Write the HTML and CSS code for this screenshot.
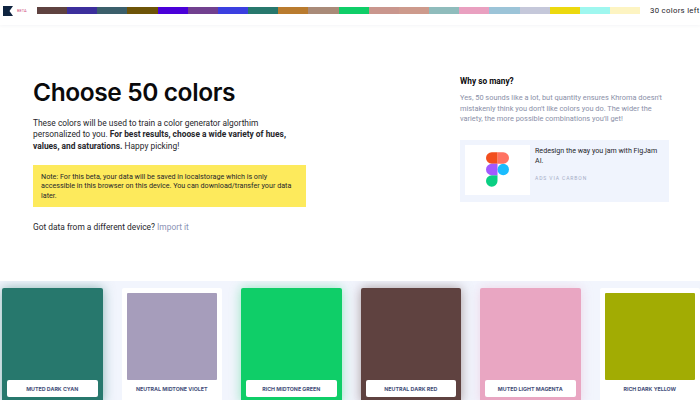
FILE: index.html
```html
<!DOCTYPE html>
<html lang="en">
<head>
  <meta charset="UTF-8">
  <meta name="viewport" content="width=device-width, initial-scale=1.0">
  <title>Choose 50 colors</title>
  <link rel="stylesheet" href="styles.css">
</head>
<body>
  <!-- Top bar with picked colors -->
  <header class="topbar">
    <div class="brand">
      <svg class="logo" viewBox="0 0 10 10" width="10" height="10"><path d="M0 0H10L6.5 5L10 10H0z" fill="#0f2440"/></svg>
      <span class="beta">BETA</span>
    </div>
    <div class="strip">
      <span class="chip c1"></span><span class="chip c2"></span><span class="chip c3"></span><span class="chip c4"></span>
      <span class="chip c5"></span><span class="chip c6"></span><span class="chip c7"></span><span class="chip c8"></span>
      <span class="chip c9"></span><span class="chip c10"></span><span class="chip c11"></span><span class="chip c12"></span>
      <span class="chip c13"></span><span class="chip c14"></span><span class="chip c15"></span><span class="chip c16"></span>
      <span class="chip c17"></span><span class="chip c18"></span><span class="chip c19"></span><span class="chip c20"></span>
    </div>
    <div class="left-count">30 colors left</div>
  </header>

  <main class="intro">
    <section class="intro-main">
      <h1>Choose 50 colors</h1>
      <p class="lead">These colors will be used to train a color generator algorthim personalized to you. <b>For best results, choose a wide variety of hues, values, and saturations.</b> Happy picking!</p>
      <div class="note">Note: For this beta, your data will be saved in localstorage which is only accessible in this browser on this device. You can download/transfer your data later.</div>
      <p class="import">Got data from a different device? <a href="#">Import it</a></p>
    </section>

    <aside class="intro-side">
      <h2>Why so many?</h2>
      <p class="why">Yes, 50 sounds like a lot, but quantity ensures Khroma doesn't mistakenly think you don't like colors you do. The wider the variety, the more possible combinations you'll get!</p>
      <div class="ad">
        <div class="ad-image">
          <svg viewBox="0 0 38 57" width="23" height="35">
            <path d="M19 28.5a9.5 9.5 0 1 1 19 0 9.5 9.5 0 0 1-19 0z" fill="#1abcfe"/>
            <path d="M0 47.5A9.5 9.5 0 0 1 9.5 38H19v9.5a9.5 9.5 0 1 1-19 0z" fill="#0acf83"/>
            <path d="M19 0v19h9.5a9.5 9.5 0 1 0 0-19H19z" fill="#ff7262"/>
            <path d="M0 9.5A9.5 9.5 0 0 0 9.5 19H19V0H9.5A9.5 9.5 0 0 0 0 9.5z" fill="#f24e1e"/>
            <path d="M0 28.5A9.5 9.5 0 0 0 9.5 38H19V19H9.5A9.5 9.5 0 0 0 0 28.5z" fill="#a259ff"/>
          </svg>
        </div>
        <div class="ad-text">
          <p>Redesign the way you jam with FigJam AI.</p>
          <span class="ad-via">ADS VIA CARBON</span>
        </div>
      </div>
    </aside>
  </main>

  <!-- Color cards -->
  <section class="cards">
    <div class="card picked cyan"><div class="swatch"></div><div class="name">MUTED DARK CYAN</div></div>
    <div class="card violet"><div class="swatch"></div><div class="name">NEUTRAL MIDTONE VIOLET</div></div>
    <div class="card picked green"><div class="swatch"></div><div class="name">RICH MIDTONE GREEN</div></div>
    <div class="card picked red"><div class="swatch"></div><div class="name">NEUTRAL DARK RED</div></div>
    <div class="card picked magenta"><div class="swatch"></div><div class="name">MUTED LIGHT MAGENTA</div></div>
    <div class="card yellow"><div class="swatch"></div><div class="name">RICH DARK YELLOW</div></div>
  </section>
</body>
</html>
```

FILE: styles.css
```css
* {
  box-sizing: border-box;
}

body {
  margin: 0;
  height: 400px;
  overflow: hidden;
  background-color: #fff;
  font-family: Roboto, "Liberation Sans", sans-serif;
  color: #26262b;
}

/* Top bar */
.topbar {
  display: flex;
  align-items: center;
  height: 25px;
  padding: 0 0 4px 3px;
  box-shadow: 0 1px 3px rgba(40, 50, 90, 0.05);
}

.brand {
  display: flex;
  align-items: center;
  width: 34px;
  gap: 4px;
}

.logo {
  display: block;
}

.beta {
  font-size: 4px;
  color: #d0507e;
}

.strip {
  display: flex;
  width: 603px;
  height: 7px;
}

.chip {
  flex: 1;
}

.c1 { background-color: #5f4240; }
.c2 { background-color: #3c2f9c; }
.c3 { background-color: #3b5f6b; }
.c4 { background-color: #6d5407; }
.c5 { background-color: #4a00d9; }
.c6 { background-color: #71408f; }
.c7 { background-color: #3b3fe0; }
.c8 { background-color: #27786d; }
.c9 { background-color: #b97b2e; }
.c10 { background-color: #a98a78; }
.c11 { background-color: #0fce68; }
.c12 { background-color: #c9968d; }
.c13 { background-color: #cd9a8c; }
.c14 { background-color: #8fbcbc; }
.c15 { background-color: #e9a0c0; }
.c16 { background-color: #9cc4d8; }
.c17 { background-color: #c5c8da; }
.c18 { background-color: #ecd90e; }
.c19 { background-color: #9ff7ef; }
.c20 { background-color: #fdf4c2; }

.left-count {
  margin-left: 10px;
  font-size: 7.8px;
  letter-spacing: 0.3px;
  white-space: nowrap;
}

/* Intro */
.intro {
  display: flex;
  justify-content: space-between;
  height: 256px;
  padding: 51px 31px 0 33px;
}

.intro-main {
  width: 273px;
}

h1 {
  margin: 0 0 9px;
  font-family: Inter, "Liberation Sans", sans-serif;
  font-size: 24.5px;
  line-height: 33px;
  font-weight: 600;
  letter-spacing: -0.4px;
  color: #0a0a0c;
  white-space: nowrap;
}

.lead {
  margin: 0 0 13px;
  font-size: 8.4px;
  line-height: 11.3px;
}

.lead b {
  font-weight: 700;
}

.note {
  height: 42px;
  padding: 7px 8px;
  background-color: #fdea5c;
  font-size: 7.2px;
  line-height: 9.5px;
}

.import {
  margin: 15px 0 0;
  font-size: 8.4px;
  line-height: 11px;
}

.import a {
  color: #8b93b5;
  text-decoration: none;
}

.intro-side {
  width: 209px;
}

h2 {
  margin: 0 0 7px;
  font-size: 8.3px;
  line-height: 10px;
  font-weight: 700;
  color: #0a0a0c;
}

.why {
  margin: 0 0 15px;
  font-size: 7.4px;
  line-height: 10.5px;
  color: #8a90a8;
}

.ad {
  display: flex;
  gap: 5px;
  height: 62px;
  padding: 5px;
  background-color: #f0f4fd;
}

.ad-image {
  display: flex;
  align-items: center;
  justify-content: center;
  flex: none;
  width: 65px;
  height: 50px;
  background-color: #fff;
}

.ad-text p {
  margin: 1px 0 8px;
  font-size: 7.1px;
  line-height: 10.5px;
}

.ad-via {
  display: block;
  font-size: 5px;
  letter-spacing: 0.9px;
  color: #a5adc6;
}

/* Cards */
.cards {
  display: flex;
  gap: 19px;
  height: 119px;
  padding: 7px 0 0 2px;
  overflow: hidden;
  background-color: #f2f5fd;
}

.card {
  flex: none;
  width: 100.5px;
  height: 115px;
  padding: 5px;
  border-radius: 2px;
  background-color: #fff;
}

.swatch {
  height: 87px;
  border-radius: 1px;
}

.name {
  display: flex;
  align-items: center;
  justify-content: center;
  height: 17px;
  border-radius: 2px;
  background-color: #fff;
  font-family: Inter, "Liberation Sans", sans-serif;
  font-size: 5.3px;
  font-weight: 700;
  color: #46507a;
  white-space: nowrap;
}

.cyan, .cyan .swatch { background-color: #27786d; }
.green, .green .swatch { background-color: #0fce68; }
.red, .red .swatch { background-color: #5f4240; }
.magenta, .magenta .swatch { background-color: #e9a6c2; }
.violet .swatch { background-color: #a69dbb; }
.yellow .swatch { background-color: #a2ac03; }

.cyan { box-shadow: 0 0 12px rgba(39, 120, 109, 0.5); }
.green { box-shadow: 0 0 12px rgba(15, 206, 104, 0.4); }
.red { box-shadow: 0 0 12px rgba(95, 66, 64, 0.5); }
.magenta { box-shadow: 0 0 12px rgba(233, 166, 194, 0.4); }
```
